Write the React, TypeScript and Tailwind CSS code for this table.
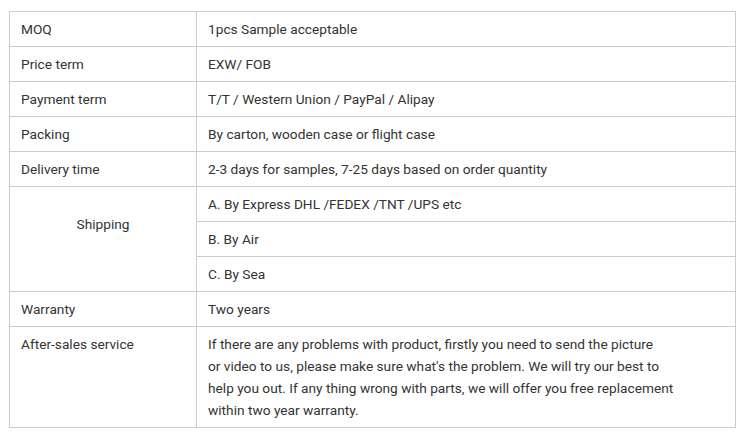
const rows: { label: string; value: string }[] = [
  { label: 'MOQ', value: '1pcs Sample acceptable' },
  { label: 'Price term', value: 'EXW/ FOB' },
  { label: 'Payment term', value: 'T/T / Western Union / PayPal / Alipay' },
  { label: 'Packing', value: 'By carton, wooden case or flight case' },
  { label: 'Delivery time', value: '2-3 days for samples, 7-25 days based on order quantity' },
];

const shipping = ['A. By Express DHL /FEDEX /TNT /UPS etc', 'B. By Air', 'C. By Sea'];

const td = 'border border-[#cccccc] px-[11px] py-[6px] align-top leading-[22px]';

const App = () => {
  return (
    <div className="bg-white w-[751px] h-[443px] pt-[11px] pl-[9px] font-['Roboto',sans-serif] text-[13.7px] text-[#333333]">
      <table className="border-collapse w-[727px] table-fixed">
        <colgroup>
          <col className="w-[187px]" />
          <col />
        </colgroup>
        <tbody>
          {rows.map(r => (
            <tr key={r.label}>
              <td className={td}>{r.label}</td>
              <td className={td}>{r.value}</td>
            </tr>
          ))}
          {shipping.map((s, i) => (
            <tr key={s}>
              {i === 0 && (
                <td rowSpan={3} className="border border-[#cccccc] px-[11px] pt-[26px] text-center align-top leading-[22px]">
                  Shipping
                </td>
              )}
              <td className={td}>{s}</td>
            </tr>
          ))}
          <tr>
            <td className={td}>Warranty</td>
            <td className={td}>Two years</td>
          </tr>
          <tr>
            <td className={td}>After-sales service</td>
            <td className={td}>
              If there are any problems with product, firstly you need to send the picture
              <br />
              or video to us, please make sure what's the problem. We will try our best to
              <br />
              help you out. If any thing wrong with parts, we will offer you free replacement
              <br />
              within two year warranty.
            </td>
          </tr>
        </tbody>
      </table>
    </div>
  );
};

export default App;
